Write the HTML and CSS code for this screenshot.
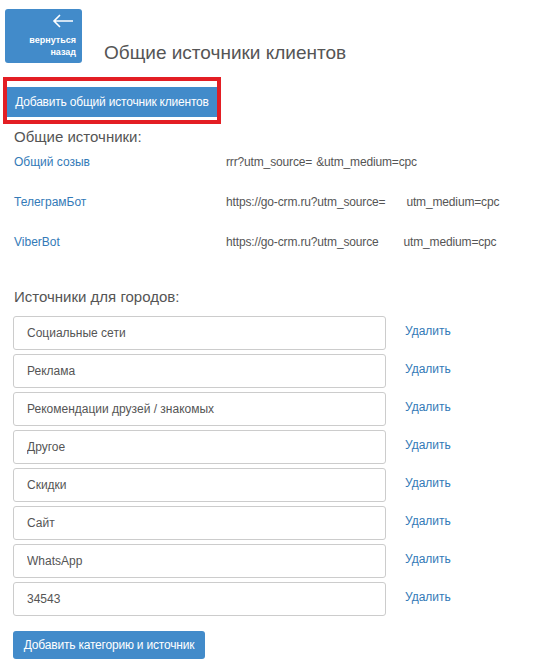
FILE: index.html
```html
<!DOCTYPE html>
<html lang="ru">
<head>
    <meta charset="UTF-8">
    <meta name="viewport" content="width=device-width, initial-scale=1.0">
    <title>Общие источники клиентов</title>
    <link rel="stylesheet" href="styles.css">
</head>
<body>

    <div class="page">
        <div class="page-head">
            <a class="back-btn" href="#">
                <svg class="back-arrow" width="22" height="14" viewBox="0 0 22 14">
                    <path d="M21 7H2M8 1L2 7l6 6" fill="none" stroke="#fff" stroke-width="1.6"/>
                </svg>
                <span>вернуться<br>назад</span>
            </a>
            <h1 class="page-title">Общие источники клиентов</h1>
        </div>

        <div class="highlight">
            <button class="btn btn-primary">Добавить общий источник клиентов</button>
        </div>

        <h3 class="section-title">Общие источники:</h3>
        <div class="sources">
            <div class="source-row">
                <a class="source-name" href="#">Общий созыв</a>
                <span class="source-url"><span>rrr?utm_source=</span><span class="url-tail short">&amp;utm_medium=cpc</span></span>
            </div>
            <div class="source-row">
                <a class="source-name" href="#">ТелеграмБот</a>
                <span class="source-url"><span>https://go-crm.ru?utm_source=</span><span class="url-tail">utm_medium=cpc</span></span>
            </div>
            <div class="source-row">
                <a class="source-name" href="#">ViberBot</a>
                <span class="source-url"><span>https://go-crm.ru?utm_source</span><span class="url-tail wide">utm_medium=cpc</span></span>
            </div>
        </div>

        <h3 class="section-title cities-title">Источники для городов:</h3>
        <div class="cities">
            <div class="city-row">
                <input class="form-control" type="text" value="Социальные сети">
                <a class="remove-link" href="#">Удалить</a>
            </div>
            <div class="city-row">
                <input class="form-control" type="text" value="Реклама">
                <a class="remove-link" href="#">Удалить</a>
            </div>
            <div class="city-row">
                <input class="form-control" type="text" value="Рекомендации друзей / знакомых">
                <a class="remove-link" href="#">Удалить</a>
            </div>
            <div class="city-row">
                <input class="form-control" type="text" value="Другое">
                <a class="remove-link" href="#">Удалить</a>
            </div>
            <div class="city-row">
                <input class="form-control" type="text" value="Скидки">
                <a class="remove-link" href="#">Удалить</a>
            </div>
            <div class="city-row">
                <input class="form-control" type="text" value="Сайт">
                <a class="remove-link" href="#">Удалить</a>
            </div>
            <div class="city-row">
                <input class="form-control" type="text" value="WhatsApp">
                <a class="remove-link" href="#">Удалить</a>
            </div>
            <div class="city-row">
                <input class="form-control" type="text" value="34543">
                <a class="remove-link" href="#">Удалить</a>
            </div>
        </div>

        <button class="btn btn-primary add-btn">Добавить категорию и источник</button>
    </div>

</body>
</html>
```

FILE: styles.css
```css
body {
    font-family: 'Liberation Sans', Arial, sans-serif;
    font-size: 12px;
    color: #555;
    margin: 0;
    padding: 0;
    background: #fff;
}

.page {
    padding: 9px 0 0 0;
}

/* header: back button + title */
.page-head {
    display: flex;
    align-items: flex-end;
    margin-left: 5px;
}

.back-btn {
    width: 77px;
    height: 54px;
    box-sizing: border-box;
    background-color: #428bca;
    border-radius: 3px;
    color: #fff;
    text-decoration: none;
    display: flex;
    flex-direction: column;
    align-items: flex-end;
    padding: 5px 6px 0 0;
    font-size: 9px;
    font-weight: bold;
    line-height: 12px;
    text-align: right;
}

.back-arrow {
    display: block;
    margin-bottom: 6px;
    margin-right: 2px;
}

.page-title {
    font-size: 19px;
    font-weight: normal;
    margin: 0 0 0 22px;
    line-height: 20px;
    padding-bottom: 0;
    color: #555;
}

/* red frame around the main action */
.highlight {
    display: inline-block;
    margin: 14px 0 0 3px;
    border: 4px solid #e31e24;
    padding: 6px 0 3px 0;
}

.btn {
    font-family: 'Liberation Sans', Arial, sans-serif;
    font-size: 12px;
    color: #fff;
    border: none;
    cursor: pointer;
}

.btn-primary {
    background-color: #428bca;
}

.highlight .btn {
    display: block;
    width: 210px;
    height: 30px;
    padding: 0;
    letter-spacing: -0.2px;
}

.section-title {
    font-size: 15px;
    font-weight: normal;
    margin: 4px 0 0 14px;
    line-height: 18px;
    color: #555;
}

.sources {
    margin: 9px 0 0 14px;
}

.source-row {
    display: flex;
    height: 40px;
    line-height: 15px;
}

.source-name {
    width: 212px;
    color: #337ab7;
    text-decoration: none;
}

.source-url {
    display: flex;
    letter-spacing: -0.15px;
}

.url-tail {
    margin-left: 21px;
}

.url-tail.short {
    margin-left: 4px;
}

.url-tail.wide {
    margin-left: 25px;
}

.cities-title {
    margin-top: 13px;
}

.cities {
    margin: 10px 0 0 13px;
}

.city-row {
    display: flex;
    margin-bottom: 4px;
}

.form-control {
    width: 373px;
    height: 34px;
    box-sizing: border-box;
    border: 1px solid #ccc;
    border-radius: 3px;
    padding: 0 13px;
    font-family: 'Liberation Sans', Arial, sans-serif;
    font-size: 12px;
    color: #555;
}

.remove-link {
    color: #337ab7;
    text-decoration: none;
    margin: 8px 0 0 19px;
}

.add-btn {
    margin: 11px 0 0 13px;
    width: 192px;
    height: 28px;
    border-radius: 3px;
    letter-spacing: -0.2px;
}
```
